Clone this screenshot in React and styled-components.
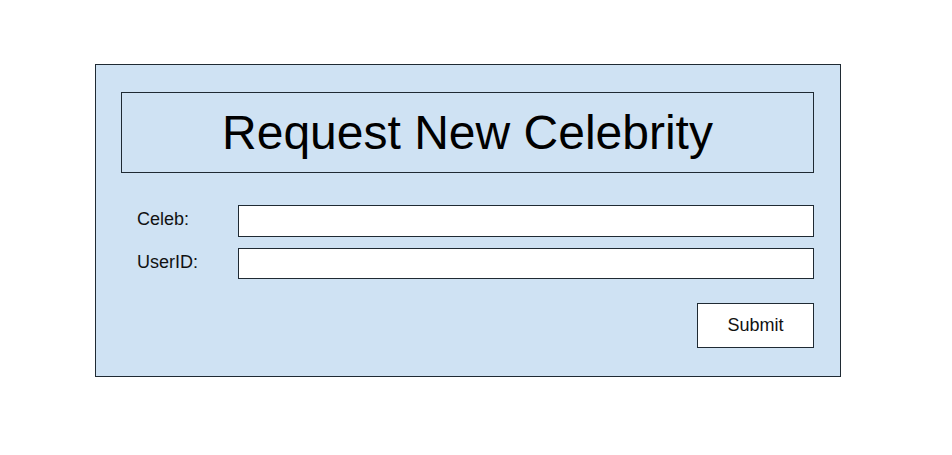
import React from 'react';
import styled, { createGlobalStyle } from 'styled-components';

const GlobalStyle = createGlobalStyle`
  body {
    margin: 0;
    background: #ffffff;
    font-family: 'Liberation Sans', Arial, sans-serif;
  }
`;

const Page = styled.div`
  padding: 64px 0 0 95px;
`;

const Panel = styled.div`
  width: 746px;
  height: 313px;
  box-sizing: border-box;
  background: #cfe2f3;
  border: 1px solid #1f2a33;
  padding: 27px 26px 0 25px;
  display: flex;
  flex-direction: column;
`;

const TitleBox = styled.div`
  height: 81px;
  box-sizing: border-box;
  border: 1px solid #1f2a33;
  display: flex;
  align-items: center;
  justify-content: center;
`;

const Title = styled.h1`
  margin: 0;
  font-size: 48px;
  font-weight: normal;
  color: #000;
`;

const Form = styled.div`
  margin-top: 32px;
  display: flex;
  flex-direction: column;
  gap: 11px;
`;

const Row = styled.div`
  display: flex;
  align-items: center;
`;

const Label = styled.label`
  width: 117px;
  box-sizing: border-box;
  padding-left: 16px;
  font-size: 18px;
  color: #111;
  margin-top: -3px;
`;

const Input = styled.input`
  flex: 1;
  height: ${p => p.$h}px;
  box-sizing: border-box;
  border: 1px solid #1f2a33;
  background: #fff;
  margin: 0;
  padding: 0 6px;
  font-family: inherit;
  font-size: 16px;
  outline: none;
`;

const Actions = styled.div`
  margin-top: 24px;
  display: flex;
  justify-content: flex-end;
`;

const Button = styled.button`
  width: 117px;
  height: 45px;
  box-sizing: border-box;
  border: 1px solid #1f2a33;
  background: #fff;
  font-family: 'Liberation Sans', Arial, sans-serif;
  font-size: 18px;
  color: #111;
  padding: 0;
  cursor: pointer;
`;

export default function App() {
  return (
    <>
      <GlobalStyle />
      <Page>
        <Panel>
          <TitleBox>
            <Title>Request New Celebrity</Title>
          </TitleBox>
          <Form>
            <Row>
              <Label>Celeb:</Label>
              <Input $h={32} />
            </Row>
            <Row>
              <Label>UserID:</Label>
              <Input $h={31} />
            </Row>
          </Form>
          <Actions>
            <Button>Submit</Button>
          </Actions>
        </Panel>
      </Page>
    </>
  );
}
